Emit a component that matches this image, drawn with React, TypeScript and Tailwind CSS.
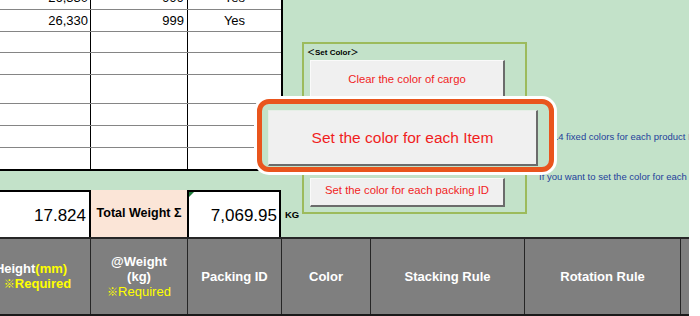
const rows = [
  { h: 'h-[24px]', a: '26,330', b: '999', c: 'Yes' },
  { h: 'h-[22px]', a: '26,330', b: '999', c: 'Yes' },
  { h: 'h-[21px]', a: '', b: '', c: '' },
  { h: 'h-[22px]', a: '', b: '', c: '' },
  { h: 'h-[29px]', a: '', b: '', c: '' },
  { h: 'h-[22px]', a: '', b: '', c: '' },
  { h: 'h-[22px]', a: '', b: '', c: '' },
  { h: 'h-[21px]', a: '', b: '', c: '' }
]

const SheetButton = ({
  label,
  className,
  textClass
}: {
  label: string
  className: string
  textClass: string
}) => (
  <div
    className={`flex items-center justify-center bg-[#f0f0f0] border-l border-t border-[#fafafa] border-r-2 border-b-2 border-r-[#6b6b6b] border-b-[#6b6b6b] text-[#f01e1e] whitespace-nowrap ${className}`}
  >
    <span className={textClass}>{label}</span>
  </div>
)

const headers = [
  { w: 'w-[94px]', label: 'Packing ID' },
  { w: 'w-[89px]', label: 'Color' },
  { w: 'w-[154px]', label: 'Stacking Rule' },
  { w: 'w-[156px]', label: 'Rotation Rule' }
]

export default function App() {
  return (
    <div className="relative w-[700px] h-[316px] overflow-hidden bg-white flex font-['Liberation_Sans','Noto_Sans_CJK_JP',sans-serif] text-black">
      <div className="w-[689px] shrink-0 bg-[#c3e2c9] flex flex-col overflow-hidden">
        {/* sheet area */}
        <div className="h-[237px] flex shrink-0">
          <div className="w-[302px] shrink-0 flex flex-col">
            <div className="w-[283px] h-[171px] bg-white border-r-2 border-b-2 border-black overflow-hidden">
              <div className="-mt-[14px]">
                {rows.map((r, i) => (
                  <div
                    key={i}
                    className={`flex ${r.h} ${i < rows.length - 1 ? 'border-b border-[#858585]' : ''} text-[13px]`}
                  >
                    <div className="w-[91px] border-r border-black flex items-center justify-end pr-[2px]">
                      {r.a}
                    </div>
                    <div className="w-[97px] border-r border-black flex items-center justify-end pr-[3px]">
                      {r.b}
                    </div>
                    <div className="flex-1 flex items-center justify-center">
                      {r.c}
                    </div>
                  </div>
                ))}
              </div>
            </div>

            <div className="mt-[19px] h-[47px] flex">
              <div className="w-[91px] bg-white border-t-2 border-r-2 border-black flex items-center justify-end pr-[3px] pt-[2px] text-[17px]">
                17.824
              </div>
              <div className="w-[96px] bg-[#fbe5d7] flex items-center justify-center font-bold text-[12.5px] whitespace-nowrap">
                Total Weight Σ
              </div>
              <div className="relative w-[94px] bg-white border-t-2 border-l-2 border-r-2 border-black flex items-center justify-end pr-[2px] pt-[2px] text-[17px]">
                <span className="absolute left-0 top-0 w-0 h-0 border-t-[5px] border-r-[5px] border-t-[#1d7a3a] border-r-transparent" />
                7,069.95
              </div>
              <div className="self-center ml-[4px] mt-[4px] font-bold text-[9.5px]">KG</div>
            </div>
          </div>

          {/* set color group */}
          <div className="mt-[42px] w-[225px] h-[172px] shrink-0 border-2 border-[#9cbb5c] flex flex-col">
            <div className="pt-[3px] pl-[3px] leading-[12px] font-bold text-[8px] whitespace-nowrap">
              ＜Set Color＞
            </div>
            <SheetButton
              label="Clear the color of cargo"
              className="ml-[6px] mt-[1px] w-[195px] h-[38px] pt-[1px]"
              textClass="text-[11.3px]"
            />
            <SheetButton
              label="Set the color for each Item"
              className="ml-[6px] mt-[20px] w-[195px] h-[30px]"
              textClass="text-[11.3px]"
            />
            <SheetButton
              label="Set the color for each packing ID"
              className="ml-[6px] mt-[30px] w-[195px] h-[29px] pb-[4px]"
              textClass="text-[11.3px]"
            />
          </div>

          <div className="flex flex-col text-[9.5px] leading-[12px] text-[#23419b] whitespace-nowrap">
            <div className="mt-[131px] ml-[9px]">Set 14 fixed colors for each product ID.</div>
            <div className="mt-[28px] ml-[12px]">If you want to set the color for each packing ID.</div>
          </div>
        </div>

        {/* header row */}
        <div className="h-[79px] flex shrink-0 bg-[#7f7f7f] border-t-2 border-b-2 border-t-[#262626] border-b-[#1a1a1a] text-white font-bold text-[13px] leading-[15px]">
          <div className="w-[91px] shrink-0 border-r border-[#262626] overflow-hidden flex flex-col items-center justify-center pr-[28px] whitespace-nowrap">
            <div>
              Height<span className="text-[#ffff00]">(mm)</span>
            </div>
            <div className="text-[#ffff00] ml-[13px]">
              <span className="text-[11px]">※</span>Required
            </div>
          </div>
          <div className="w-[97px] shrink-0 border-r border-[#262626] flex flex-col items-center justify-center whitespace-nowrap">
            <div>@Weight</div>
            <div>(kg)</div>
            <div className="text-[#ffff00] font-normal">
              <span className="text-[11px]">※</span>Required
            </div>
          </div>
          {headers.map((h) => (
            <div
              key={h.label}
              className={`${h.w} shrink-0 border-r border-[#262626] flex items-center justify-center whitespace-nowrap`}
            >
              {h.label}
            </div>
          ))}
          <div className="flex-1" />
        </div>
      </div>
      <div className="flex-1" />

      {/* callout highlight */}
      <div className="absolute left-[254px] top-[96px] w-[303px] h-[79px] rounded-[15px] bg-white p-[3px]">
        <div className="h-full rounded-[12px] border-[5px] border-[#e9551d] bg-[#c3e2c9] pl-[6px] pt-[6px]">
          <SheetButton
            label="Set the color for each Item"
            className="w-[270px] h-[56px] border-l-[#e6efe7] border-t-[#e6efe7]"
            textClass="text-[15.5px]"
          />
        </div>
      </div>
    </div>
  )
}
